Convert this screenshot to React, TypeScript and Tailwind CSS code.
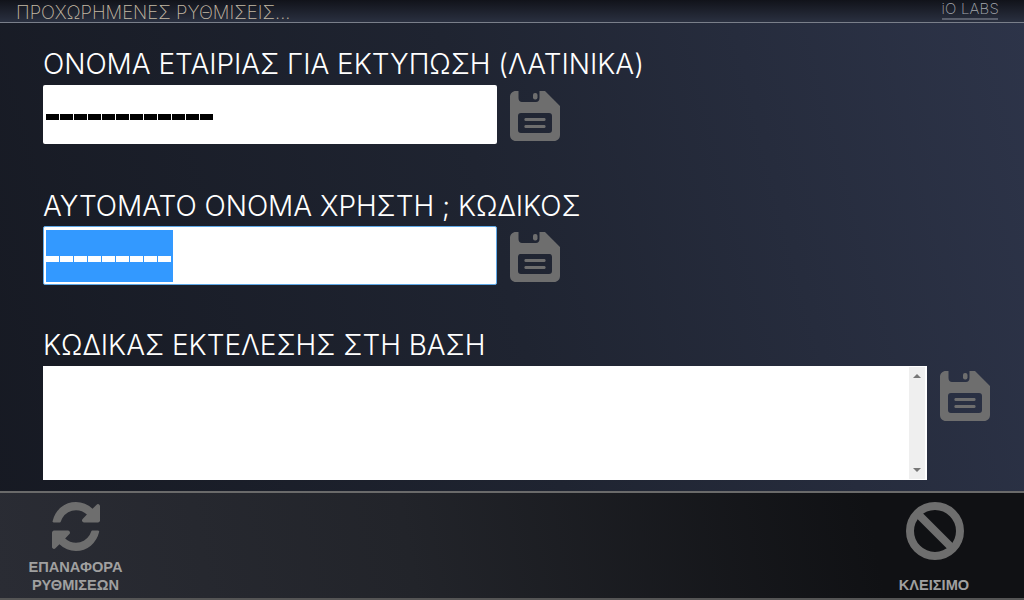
function SaveIcon({ className }: { className?: string }) {
  return (
    <svg viewBox="0 0 50 50" className={`w-[50px] h-[50px] shrink-0 text-[#6e6e6e] ${className ?? ""}`}>
      <path
        fillRule="evenodd"
        fill="currentColor"
        d="M6 0H8.5V7C8.5 9.5 10 11 12 11H26C28 11 29.5 9.5 29.5 7V0H35L50 15V44C50 47.5 47.5 50 44 50H6C2.5 50 0 47.5 0 44V6C0 2.5 2.5 0 6 0ZM11 22C9 22 8 23 8 25V39C8 41 9 42 11 42H39C41 42 42 41 42 39V25C42 23 41 22 39 22ZM15.5 27H34.5C36 27 36 30 34.5 30H15.5C14 30 14 27 15.5 27ZM15.5 34H34.5C36 34 36 37 34.5 37H15.5C14 37 14 34 15.5 34Z"
      />
      <rect x="23" y="2" width="4.5" height="6.5" rx="2" fill="currentColor" />
    </svg>
  );
}

function RefreshIcon() {
  return (
    <svg viewBox="128 128 1536 1536" className="w-[48px] h-[49px] text-[#6e6e6e] ml-px" preserveAspectRatio="none">
      <path
        fill="currentColor"
        d="M1639 1056q0 5-1 7-64 268-268 434.5t-478 166.5q-146 0-282.5-55t-243.5-157l-129 129q-19 19-45 19t-45-19-19-45v-448q0-26 19-45t45-19h448q26 0 45 19t19 45-19 45l-137 137q71 66 161 102t187 36q134 0 250-65t186-179q11-17 53-117 8-23 30-23h192q13 0 22.5 9.5t9.5 22.5zm25-800v448q0 26-19 45t-45 19h-448q-26 0-45-19t-19-45 19-45l138-138q-148-137-349-137-134 0-250 65t-186 179q-11 17-53 117-8 23-30 23h-199q-13 0-22.5-9.5t-9.5-22.5v-7q65-268 270-434.5t480-166.5q146 0 284 55.5t245 156.5l130-129q19-19 45-19t45 19 19 45z"
      />
    </svg>
  );
}

function BanIcon() {
  return (
    <svg viewBox="0 0 58 58" className="w-[58px] h-[58px] text-[#6e6e6e]">
      <circle cx="29" cy="29" r="25" fill="none" stroke="currentColor" strokeWidth="8" />
      <path d="M11 11L47 47" stroke="currentColor" strokeWidth="8" />
    </svg>
  );
}

function Dashes({ count, color }: { count: number; color: string }) {
  return (
    <div className="flex">
      {Array.from({ length: count }).map((_, i) => (
        <div key={i} className={`h-[6px] w-[13px] mr-px ${color}`} />
      ))}
    </div>
  );
}

const labelCls =
  "font-['Inter','Liberation_Sans',sans-serif] font-light text-white text-[28px] leading-[32px] tracking-[-0.05px] whitespace-nowrap";

export default function App() {
  return (
    <div className="w-[1024px] h-[600px] overflow-hidden flex flex-col bg-[linear-gradient(75deg,#161922_0%,#1f2431_50%,#2d3449_100%)] font-['Liberation_Sans',sans-serif]">
      <header className="h-[23px] shrink-0 border-b border-[#7a7f8a] bg-[linear-gradient(180deg,#11131a_0%,#2a3040_100%)] flex justify-between items-start pl-4 pr-[25px]">
        <span className="font-['Inter','Liberation_Sans',sans-serif] font-extralight text-[18.5px] leading-[25px] text-[#c4b9a4] whitespace-nowrap">
          ΠΡΟΧΩΡΗΜΕΝΕΣ ΡΥΘΜΙΣΕΙΣ...
        </span>
        <div className="pt-[2px] flex flex-col items-center">
          <span className="text-[15px] leading-[14px] text-[#a5a8ae] font-['Inter',sans-serif] font-extralight tracking-[0.2px] whitespace-nowrap">
            iO LABS
          </span>
          <div className="h-[2px] w-[56px] mt-[2px] bg-[#5a5f6c]" />
        </div>
      </header>

      <main className="flex-1 min-h-0 flex flex-col pl-[43px] pt-[25px]">
        <h2 className={labelCls}>ΟΝΟΜΑ ΕΤΑΙΡΙΑΣ ΓΙΑ ΕΚΤΥΠΩΣΗ (ΛΑΤΙΝΙΚΑ)</h2>
        <div className="flex items-start gap-[13px] mt-[5px]">
          <div className="w-[454px] h-[59px] bg-white rounded-[2px] pl-[3px] flex items-center pt-[5px]">
            <Dashes count={12} color="bg-black" />
          </div>
          <SaveIcon className="mt-[6px]" />
        </div>

        <h2 className={`${labelCls} mt-[46px]`}>ΑΥΤΟΜΑΤΟ ΟΝΟΜΑ ΧΡΗΣΤΗ ; ΚΩΔΙΚΟΣ</h2>
        <div className="flex items-start gap-[13px] mt-[4px]">
          <div className="w-[454px] h-[59px] bg-white rounded-[2px] border border-[#5fa8e6] pl-[2px] flex items-center">
            <div className="w-[127px] h-[52px] bg-[#3399ff] flex items-center pt-[7px]">
              <Dashes count={9} color="bg-white" />
            </div>
          </div>
          <SaveIcon className="mt-[6px]" />
        </div>

        <h2 className={`${labelCls} mt-[44px]`}>ΚΩΔΙΚΑΣ ΕΚΤΕΛΕΣΗΣ ΣΤΗ ΒΑΣΗ</h2>
        <div className="flex items-start gap-[13px] mt-[5px]">
          <div className="w-[884px] h-[114px] bg-white flex justify-end p-px pr-[2px]">
            <div className="w-[16px] bg-[#efefef] flex flex-col justify-between items-center py-[7px]">
              <div className="w-0 h-0 border-x-[4px] border-x-transparent border-b-[4px] border-b-[#777]" />
              <div className="w-0 h-0 border-x-[4px] border-x-transparent border-t-[4px] border-t-[#777]" />
            </div>
          </div>
          <SaveIcon className="mt-[5px]" />
        </div>
      </main>

      <footer className="h-[109px] shrink-0 border-y-2 border-t-[#6a6a6a] border-b-[#555] bg-[linear-gradient(80deg,#2a2c34_0%,#22242a_40%,#101114_85%)] flex justify-between text-[#a0a0a0] font-bold text-[14.6px] leading-[18px]">
        <button className="w-[151px] flex flex-col items-center pt-[9px]">
          <RefreshIcon />
          <span className="mt-[7px]">
            ΕΠΑΝΑΦΟΡΑ
            <br />
            ΡΥΘΜΙΣΕΩΝ
          </span>
        </button>
        <button className="w-[178px] flex flex-col items-center pt-[9px]">
          <BanIcon />
          <span className="mt-[16px] mr-[2px]">ΚΛΕΙΣΙΜΟ</span>
        </button>
      </footer>
    </div>
  );
}
